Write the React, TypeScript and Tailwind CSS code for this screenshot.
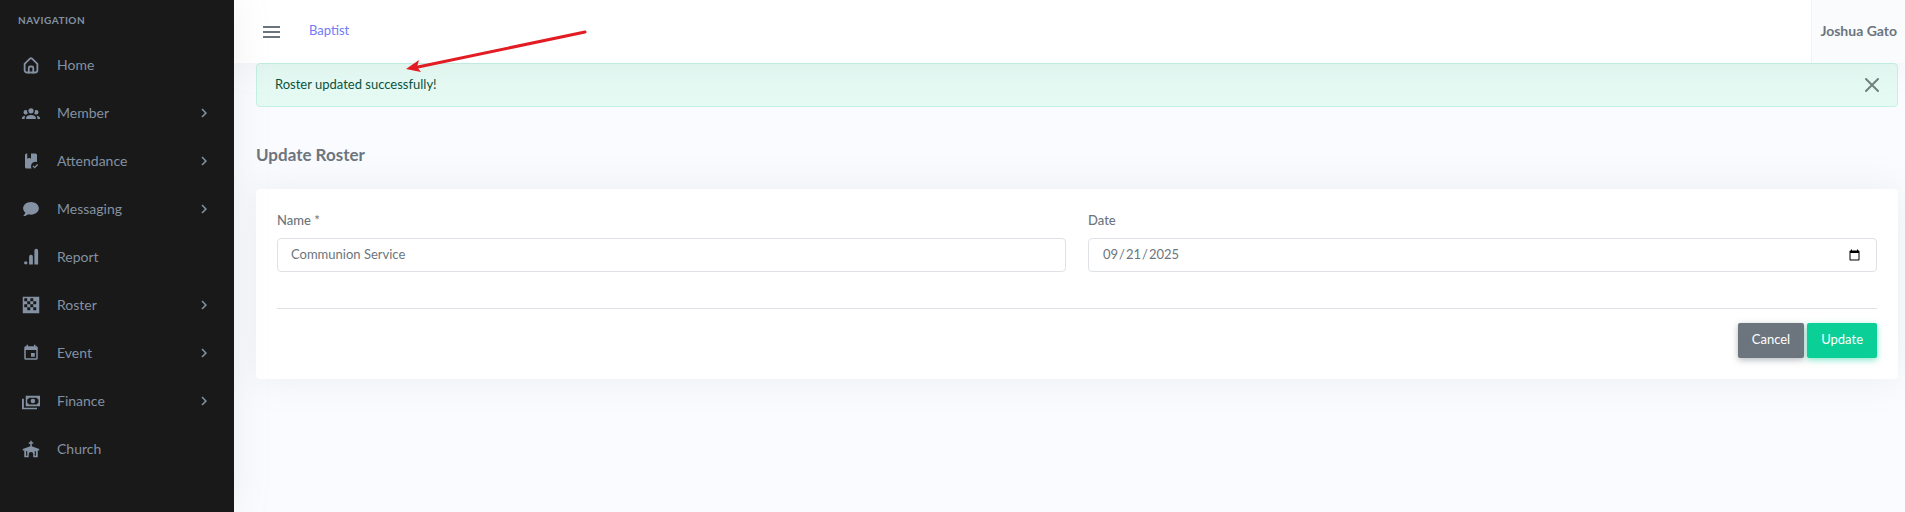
import type { ReactElement } from 'react'
import { MdChevronRight, MdEvent } from 'react-icons/md'

type Item = { label: string; icon: ReactElement; nested?: boolean }

function Icon({ d }: { d: string }) {
  return (
    <svg viewBox="0 0 24 24" className="size-[18px]" fill="currentColor" aria-hidden="true">
      <path fillRule="evenodd" d={d} />
    </svg>
  )
}

const items: Item[] = [
  {
    label: 'Home',
    icon: (
      <svg viewBox="0 0 24 24" className="size-[18px]" fill="none" stroke="currentColor" strokeWidth="2.4" strokeLinecap="round" strokeLinejoin="round" aria-hidden="true">
        <path d="M3.500 10.500 10.600 3.600a2 2 0 0 1 2.800 0l7.100 6.900V19a3 3 0 0 1-3 3h-11a3 3 0 0 1-3-3z" />
        <path d="M9 22v-6a2 2 0 0 1 2-2h2a2 2 0 0 1 2 2v6" />
      </svg>
    ),
  },
  {
    label: 'Member',
    nested: true,
    icon: <Icon d="M12 5.5A3.5 3.5 0 0 1 15.5 9 3.5 3.5 0 0 1 12 12.5 3.5 3.5 0 0 1 8.5 9 3.5 3.5 0 0 1 12 5.5M5 8c.56 0 1.08.15 1.53.42-.15 1.43.27 2.85 1.13 3.96C7.16 13.34 6.16 14 5 14a3 3 0 0 1-3-3 3 3 0 0 1 3-3m14 0a3 3 0 0 1 3 3 3 3 0 0 1-3 3c-1.16 0-2.16-.66-2.66-1.62.86-1.11 1.28-2.53 1.13-3.96.45-.27.97-.42 1.53-.42M5.5 18.25c0-2.07 2.91-3.75 6.5-3.75s6.5 1.68 6.5 3.75V20h-13v-1.750M0 20v-1.500c0-1.390 1.890-2.560 4.450-2.900-.59.68-.95 1.620-.95 2.650V20H0m24 0h-3.500v-1.750c0-1.030-.36-1.970-.95-2.650 2.560.34 4.450 1.510 4.450 2.900V20z" />,
  },
  {
    label: 'Attendance',
    nested: true,
    icon: <Icon d="M16.75 22.16 14 19.16l1.16-1.16 1.59 1.59 3.59-3.59 1.16 1.41-4.75 4.75M18 2a2 2 0 0 1 2 2v9.34A6 6 0 0 0 12 19c0 1.09.29 2.12.8 3H6a2 2 0 0 1-2-2V4a2 2 0 0 1 2-2h1v7l2.500-1.500L12 9V2z" />,
  },
  {
    label: 'Messaging',
    nested: true,
    icon: <Icon d="M12 2.500c5.800 0 10.500 3.800 10.500 8.500s-4.700 8.500-10.500 8.500c-1.240 0-2.430-.18-3.530-.5C5.550 21.500 1.500 21.500 1.500 21.500c2.330-2.330 2.900-3.900 2.950-4.700C2.600 15.300 1.500 13.200 1.500 11c0-4.700 4.700-8.500 10.500-8.500z" />,
  },
  {
    label: 'Report',
    icon: <Icon d="M5 17.500a2.300 2.300 0 1 1 0 4.600 2.300 2.300 0 0 1 0-4.600zM12 9a2.500 2.500 0 0 1 2.500 2.500V22h-5V11.500A2.500 2.500 0 0 1 12 9zM19 1a2.500 2.500 0 0 1 2.500 2.500V22h-5V3.500A2.500 2.500 0 0 1 19 1z" />,
  },
  {
    label: 'Roster',
    nested: true,
    icon: <Icon d="M1 1h22v22H1zM3 3v4h4V3zM11 3v4h4V3zM7 7v4h4V7zM15 7v4h4V7zM3 11v4h4v-4zM11 11v4h4v-4zM7 15v4h4v-4zM15 15v4h4v-4z" />,
  },
  { label: 'Event', nested: true, icon: <MdEvent className="size-[18px]" /> },
  {
    label: 'Finance',
    nested: true,
    icon: <Icon d="M5 5h19v14H5V5m9.500 4a3 3 0 0 1 3 3 3 3 0 0 1-3 3 3 3 0 0 1-3-3 3 3 0 0 1 3-3M9 7.500a2 2 0 0 1-2 2v5a2 2 0 0 1 2 2h11a2 2 0 0 1 2-2v-5a2 2 0 0 1-2-2H9M0 9h2.500v12H20v2H0V9z" />,
  },
  {
    label: 'Church',
    icon: <Icon d="M11 1h2v2h2v2h-2v3.400l10 3.600v2h-2v9h-6v-4a3 3 0 0 0-6 0v4H3v-9H1v-2l10-3.600V5H9V3h2V1zM5.500 15v6h1.500v-6zM17 15v6h1.500v-6z" />,
  },
]

function Sidebar() {
  return (
    <aside className="relative z-10 w-[234px] shrink-0 bg-[#191919] text-[#8391a2] shadow-[0_0_35px_0_rgba(154,161,171,0.15)]">
      <h2 className="px-[18px] pt-3 text-[10px] leading-4 font-bold tracking-wider">NAVIGATION</h2>
      <nav className="pt-[13px]">
        {items.map((item) => (
          <a key={item.label} href="#" className="flex h-12 items-center pr-[21px] pl-[22px] text-sm">
            <span className="mr-[17px]">{item.icon}</span>
            {item.label}
            {item.nested && <MdChevronRight className="ml-auto size-[18px]" />}
          </a>
        ))}
      </nav>
    </aside>
  )
}

function Topbar() {
  return (
    <header className="relative flex h-[63px] items-center bg-white pl-[29px] shadow-[0_0_35px_0_rgba(154,161,171,0.15)]">
      <button type="button" aria-label="Toggle menu" className="flex w-[17px] flex-col gap-[3px] text-[#6c757d]">
        <span className="h-[2px] w-full bg-current" />
        <span className="h-[2px] w-full bg-current" />
        <span className="h-[2px] w-full bg-current" />
      </button>
      <a href="#" className="ml-[29px] pb-0.5 text-[#727cf5]">Baptist</a>
      <button type="button" className="ml-auto h-full border-l border-[#f1f3fa] bg-[#fafbfd] px-2 pb-0.5 text-sm font-bold text-[#6c757d]">
        Joshua Gato
      </button>
      <svg viewBox="0 0 184 44" className="pointer-events-none absolute top-[29px] left-[170px] z-10 w-[184px]" aria-hidden="true">
        <path d="M181 3 14 38" stroke="#e31b23" strokeWidth="3" strokeLinecap="round" />
        <path d="M2 40 15 31 13 38 17 43z" fill="#e31b23" />
      </svg>
    </header>
  )
}

export default function App() {
  return (
    <div className="flex min-h-screen bg-[#fafbfe] font-[Lato,sans-serif] text-[13px] text-[#6c757d]">
      <Sidebar />
      <div className="min-w-0 flex-1">
        <Topbar />
        <main className="pr-[7px] pl-[22px]">
          <div role="alert" className="flex h-11 items-center justify-between rounded border border-[#c2f2e4] bg-[#e6faf4] px-[18px] text-[#06533c]">
            Roster updated successfully!
            <button type="button" aria-label="Close">
              <svg viewBox="0 0 14 14" className="size-[14px] text-[#73807c]" stroke="currentColor" strokeWidth="2" strokeLinecap="round">
                <path d="m1 1 12 12M13 1 1 13" />
              </svg>
            </button>
          </div>
          <h1 className="pt-9 pb-[22px] text-[17px] leading-6 font-bold">Update Roster</h1>
          <form className="rounded bg-white p-[21px] shadow-[0_0_35px_0_rgba(154,161,171,0.15)]">
            <div className="grid grid-cols-2 gap-[22px]">
              <div>
                <label htmlFor="name" className="mb-2 block leading-5 font-medium">Name *</label>
                <input id="name" defaultValue="Communion Service" className="h-[34px] w-full rounded border border-[#dee2e6] px-[13px] pb-0.5" />
              </div>
              <div>
                <label htmlFor="date" className="mb-2 block leading-5 font-medium">Date</label>
                <input id="date" type="date" defaultValue="2025-09-21" className="h-[34px] w-full rounded border border-[#dee2e6] px-[13px]" />
              </div>
            </div>
            <hr className="mt-9 mb-[14px] border-[#dee2e6]" />
            <div className="flex justify-end gap-[3px] text-white">
              <button type="button" className="h-[35px] rounded-xs bg-[#6c757d] px-[14px] pb-0.5 shadow-[0_2px_6px_0_rgba(108,117,125,0.5)]">Cancel</button>
              <button type="submit" className="h-[35px] rounded-xs bg-[#0acf97] px-[14px] pb-0.5 shadow-[0_2px_6px_0_rgba(10,207,151,0.5)]">Update</button>
            </div>
          </form>
        </main>
      </div>
    </div>
  )
}
